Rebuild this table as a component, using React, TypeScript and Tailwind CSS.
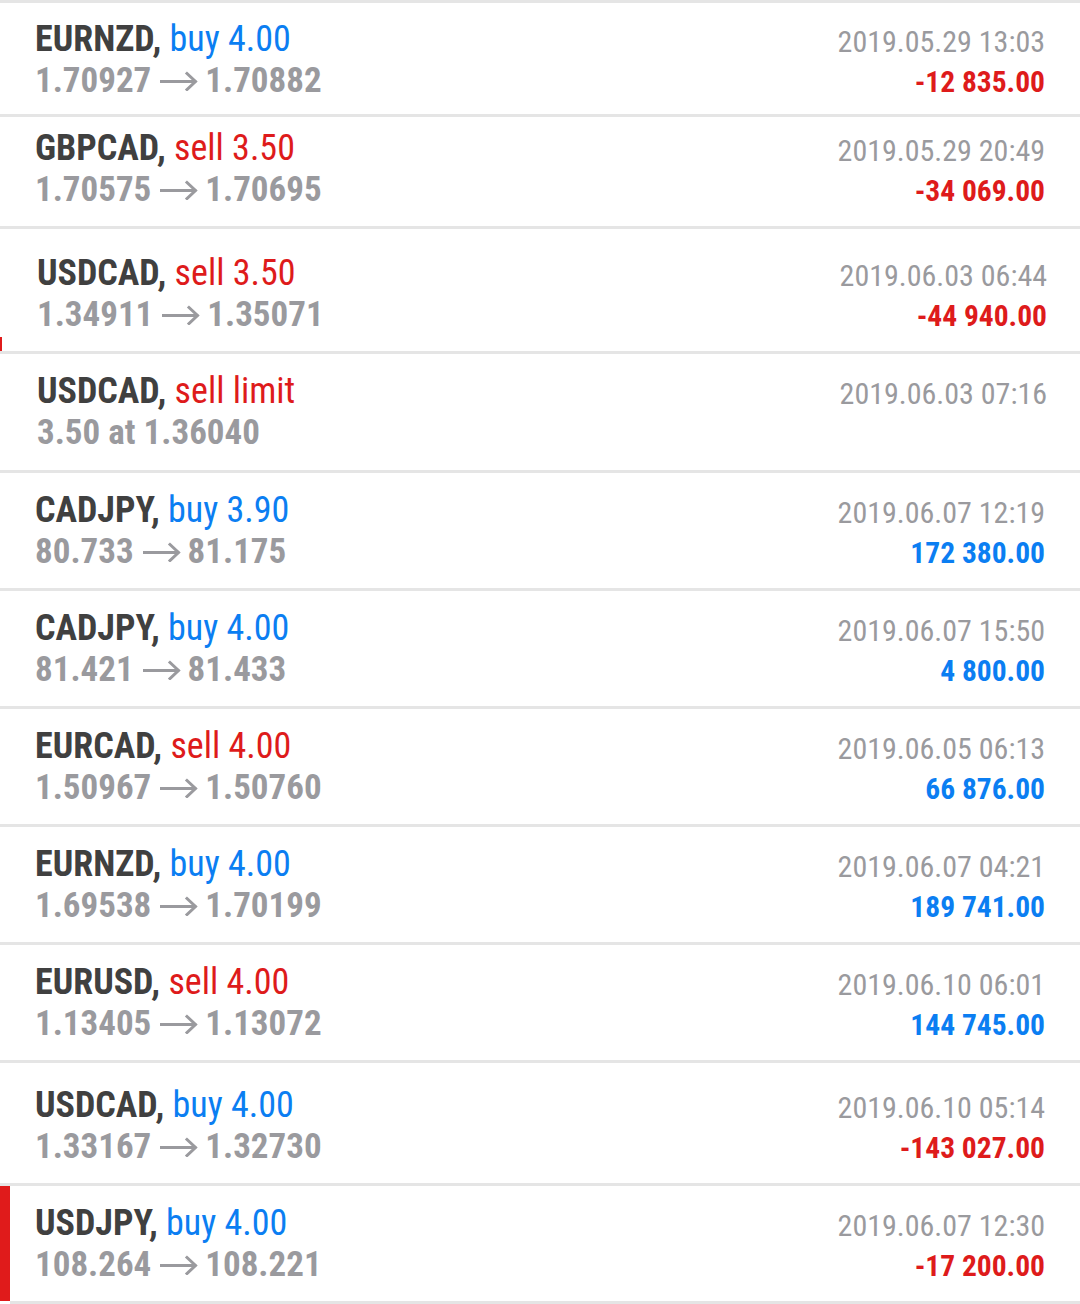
type Trade = {
  symbol: string;
  side: string;
  buy: boolean;
  from: string;
  to?: string;
  time: string;
  profit?: string;
  h: string;
  pt: string;
  shift?: boolean;
};

const trades: Trade[] = [
  { symbol: "EURNZD", side: "buy 4.00", buy: true, from: "1.70927", to: "1.70882", time: "2019.05.29 13:03", profit: "-12 835.00", h: "h-[111px]", pt: "pt-[16px]" },
  { symbol: "GBPCAD", side: "sell 3.50", buy: false, from: "1.70575", to: "1.70695", time: "2019.05.29 20:49", profit: "-34 069.00", h: "h-[109px]", pt: "pt-[11px]" },
  { symbol: "USDCAD", side: "sell 3.50", buy: false, from: "1.34911", to: "1.35071", time: "2019.06.03 06:44", profit: "-44 940.00", h: "h-[122px]", pt: "pt-[24px]", shift: true },
  { symbol: "USDCAD", side: "sell limit", buy: false, from: "3.50 at 1.36040", time: "2019.06.03 07:16", h: "h-[116px]", pt: "pt-[17px]", shift: true },
  { symbol: "CADJPY", side: "buy 3.90", buy: true, from: "80.733", to: "81.175", time: "2019.06.07 12:19", profit: "172 380.00", h: "h-[115px]", pt: "pt-[17px]" },
  { symbol: "CADJPY", side: "buy 4.00", buy: true, from: "81.421", to: "81.433", time: "2019.06.07 15:50", profit: "4 800.00", h: "h-[115px]", pt: "pt-[17px]" },
  { symbol: "EURCAD", side: "sell 4.00", buy: false, from: "1.50967", to: "1.50760", time: "2019.06.05 06:13", profit: "66 876.00", h: "h-[115px]", pt: "pt-[17px]" },
  { symbol: "EURNZD", side: "buy 4.00", buy: true, from: "1.69538", to: "1.70199", time: "2019.06.07 04:21", profit: "189 741.00", h: "h-[115px]", pt: "pt-[17px]" },
  { symbol: "EURUSD", side: "sell 4.00", buy: false, from: "1.13405", to: "1.13072", time: "2019.06.10 06:01", profit: "144 745.00", h: "h-[115px]", pt: "pt-[17px]" },
  { symbol: "USDCAD", side: "buy 4.00", buy: true, from: "1.33167", to: "1.32730", time: "2019.06.10 05:14", profit: "-143 027.00", h: "h-[120px]", pt: "pt-[22px]" },
  { symbol: "USDJPY", side: "buy 4.00", buy: true, from: "108.264", to: "108.221", time: "2019.06.07 12:30", profit: "-17 200.00", h: "h-[115px]", pt: "pt-[17px]" },
];

function Arrow() {
  return (
    <svg width="38" height="20" viewBox="0 0 38 20" className="ml-[9px] mr-[7px] shrink-0" fill="none">
      <path d="M1 10.5H35M27 2.5L35.5 10.5L27 18.5" stroke="#9a9a9e" strokeWidth="3" strokeLinecap="square" />
    </svg>
  );
}

function Row({ t, index }: { t: Trade; index: number }) {
  const last = index === trades.length - 1;
  const negative = t.profit?.startsWith("-");
  return (
    <div className="border-t-[3px] border-[#e5e5e5]">
      <div
        className={`relative flex justify-between ${t.h} ${t.pt} ${t.shift ? "pl-[37px] pr-[33px]" : "pl-[35px] pr-[35px]"}`}
      >
        {/* red markers on the left edge */}
        {index === 2 && <div className="absolute left-0 bottom-0 w-[2px] h-[14px] bg-[#e01b1b]" />}
        {last && <div className="absolute left-0 top-0 bottom-0 w-[10px] bg-[#e01b1b]" />}

        <div className="flex flex-col">
          <div className="text-[36px] leading-[41px] whitespace-nowrap">
            <span className="font-bold text-[#404040]">{t.symbol},</span>{" "}
            <span className={t.buy ? "text-[#0b7ef2]" : "text-[#de1b1b]"}>{t.side}</span>
          </div>
          <div className="flex items-center h-[41px] text-[35px] leading-[41px] font-bold text-[#9a9a9e] whitespace-nowrap">
            <span>{t.from}</span>
            {t.to && (
              <>
                <Arrow />
                <span>{t.to}</span>
              </>
            )}
          </div>
        </div>

        <div className="flex flex-col items-end pt-[2px]">
          <div className="text-[30px] leading-[41px] text-[#9a9a9e] whitespace-nowrap">{t.time}</div>
          {t.profit && (
            <div
              className={`text-[29.5px] leading-[41px] font-bold whitespace-nowrap ${negative ? "text-[#de1b1b]" : "text-[#0b7ef2]"}`}
            >
              {t.profit}
            </div>
          )}
        </div>
      </div>
      {last && (
        <div className="flex">
          <div className="w-[10px] h-[3px] bg-white" />
          <div className="flex-1 h-[3px] bg-[#e5e5e5]" />
        </div>
      )}
    </div>
  );
}

export default function App() {
  return (
    <div
      className="w-[1080px] h-[1304px] overflow-hidden bg-white"
      style={{ fontFamily: "'Roboto Condensed', Roboto, 'Liberation Sans Narrow', sans-serif" }}
    >
      {trades.map((t, i) => (
        <Row key={i} t={t} index={i} />
      ))}
    </div>
  );
}
